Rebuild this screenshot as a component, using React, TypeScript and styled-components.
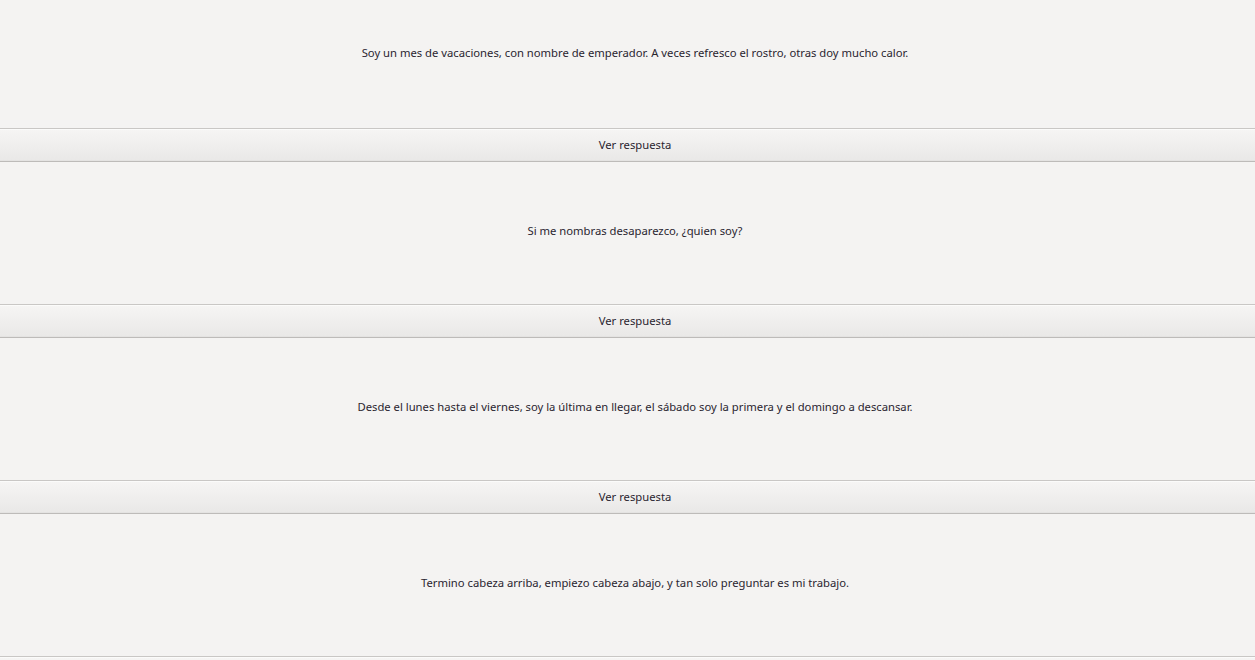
import styled, { createGlobalStyle } from 'styled-components'

const Global = createGlobalStyle`
  html, body {
    margin: 0;
    padding: 0;
    overflow: hidden;
    background: #f4f3f2;
    font-family: 'Noto Sans', 'Open Sans', sans-serif;
  }
`

// the app is a little wider than the window, so content centres at ~635
const Page = styled.div`
  width: 1270px;
  height: 660px;
  overflow: hidden;
  display: flex;
  flex-direction: column;
  background: #f4f3f2;
`

const Riddle = styled.div<{ $h: number; $pb: number }>`
  flex: 0 0 ${(p) => p.$h}px;
  display: flex;
  align-items: center;
  justify-content: center;
  font-size: 11.25px;
  color: #2a2530;
  padding-bottom: ${(p) => p.$pb}px;
  box-sizing: border-box;
`

const AnswerButton = styled.button`
  flex: 0 0 34px;
  width: 100%;
  margin: 0;
  padding: 0 0 2px;
  border: none;
  border-top: 1px solid #c9c7c5;
  border-bottom: 1px solid #bdbbb9;
  box-shadow: inset 0 1px 0 #fbfbfa, inset 0 -1px 0 #e4e3e2;
  background: linear-gradient(#f6f5f4, #e9e8e7);
  font-family: 'Noto Sans', 'Open Sans', sans-serif;
  font-size: 11.25px;
  color: #2a2530;
  cursor: pointer;
`

const riddles = [
  'Soy un mes de vacaciones, con nombre de emperador. A veces refresco el rostro, otras doy mucho calor.',
  'Si me nombras desaparezco, ¿quien soy?',
  'Desde el lunes hasta el viernes, soy la última en llegar, el sábado soy la primera y el domingo a descansar.',
  'Termino cabeza arriba, empiezo cabeza abajo, y tan solo preguntar es mi trabajo.',
]

export default function App() {
  return (
    <>
      <Global />
      <Page>
        {riddles.map((r, i) => (
          <div key={i} style={{ display: 'contents' }}>
            <Riddle $h={i === 0 ? 128 : 142} $pb={i === 0 ? 24 : 6}>
              {r}
            </Riddle>
            <AnswerButton>Ver respuesta</AnswerButton>
          </div>
        ))}
      </Page>
    </>
  )
}
